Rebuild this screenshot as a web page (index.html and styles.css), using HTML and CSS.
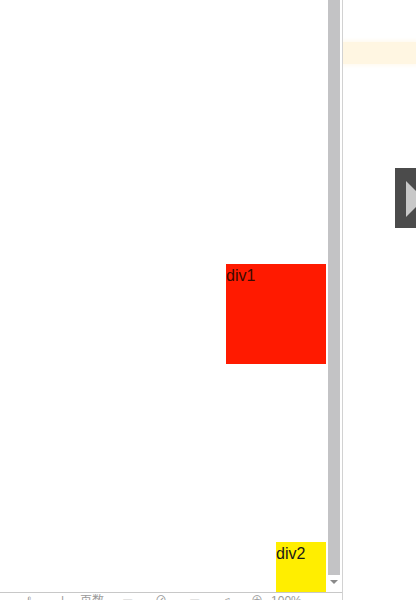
FILE: index.html
```html
<!DOCTYPE html>
<html lang="zh">
<head>
<meta charset="utf-8">
<title>div demo</title>
<link rel="stylesheet" href="styles.css">
</head>
<body>
<div class="window">
  <div class="left">
    <div class="viewport">
      <div class="page">
        <div class="box box-red">div1</div>
        <div class="box box-yellow">div2</div>
      </div>
      <div class="scrollbar">
        <div class="thumb"></div>
        <div class="arrow-down"></div>
      </div>
    </div>
    <div class="statusbar">
      <span class="st st-a">ℓ</span>
      <span class="st st-b">|</span>
      <span class="st st-c">页数</span>
      <span class="st st-d">▭</span>
      <span class="st st-e">⊘</span>
      <span class="st st-f">▭</span>
      <span class="st st-g">♫</span>
      <span class="st st-h">⊕</span>
      <span class="st st-i">100%</span>
    </div>
  </div>
  <div class="right">
    <div class="band"></div>
    <div class="tab"><div class="tri"></div></div>
  </div>
</div>
</body>
</html>
```

FILE: styles.css
```css
html, body {
  margin: 0;
  padding: 0;
  background: #ffffff;
}
body {
  width: 416px;
  height: 600px;
  overflow: hidden;
  font-family: "Liberation Sans", "Noto Sans CJK SC", sans-serif;
}
.window {
  display: flex;
  height: 600px;
}
.left {
  width: 342px;
  display: flex;
  flex-direction: column;
  border-right: 1px solid #d2d2d2;
}
.viewport {
  display: flex;
  height: 592px;
}
.page {
  width: 326px;
  display: flex;
  flex-direction: column;
  align-items: flex-end;
  padding-top: 264px;
  box-sizing: border-box;
}
.box {
  font-size: 16px;
  line-height: 20px;
  padding-top: 2px;
  box-sizing: border-box;
  color: #1a1a1a;
}
.box-red {
  width: 100px;
  height: 100px;
  background: #ff1a00;
  color: #3a0a00;
}
.box-yellow {
  width: 50px;
  height: 50px;
  margin-top: 178px;
  background: #ffee00;
}
.scrollbar {
  width: 16px;
  padding-left: 2px;
  box-sizing: border-box;
  display: flex;
  flex-direction: column;
  align-items: flex-start;
}
.thumb {
  width: 12px;
  height: 575px;
  background: #c3c3c5;
}
.arrow-down {
  margin-top: 5px;
  margin-left: 2px;
  width: 0;
  height: 0;
  border-left: 4px solid transparent;
  border-right: 4px solid transparent;
  border-top: 4px solid #8a8a8a;
}
.statusbar {
  flex: 1;
  border-top: 1px solid #c8c8c8;
  display: flex;
  align-items: flex-start;
  overflow: hidden;
}
.st {
  font-size: 12px;
  line-height: 12px;
  color: #9a9a9a;
  margin-top: 2px;
}
.st-a { margin-left: 27px; }
.st-b { margin-left: 30px; }
.st-c { margin-left: 16px; }
.st-d { margin-left: 18px; }
.st-e { margin-left: 22px; }
.st-f { margin-left: 22px; }
.st-g { margin-left: 22px; }
.st-h { margin-left: 20px; }
.st-i { margin-left: 8px; }
.right {
  flex: 1;
  display: flex;
  flex-direction: column;
  overflow: hidden;
}
.band {
  margin-top: 42px;
  height: 22px;
  background: #fff6e2;
  box-shadow: 0 0 4px 2px #fffaf0;
}
.tab {
  margin-top: 104px;
  margin-left: auto;
  width: 21px;
  height: 60px;
  background: #4b4b4b;
  overflow: hidden;
  display: flex;
  align-items: center;
}
.tri {
  margin-left: 11px;
  margin-top: 2px;
  width: 0;
  height: 0;
  border-top: 18px solid transparent;
  border-bottom: 18px solid transparent;
  border-left: 18px solid #c8c8c8;
}
```
